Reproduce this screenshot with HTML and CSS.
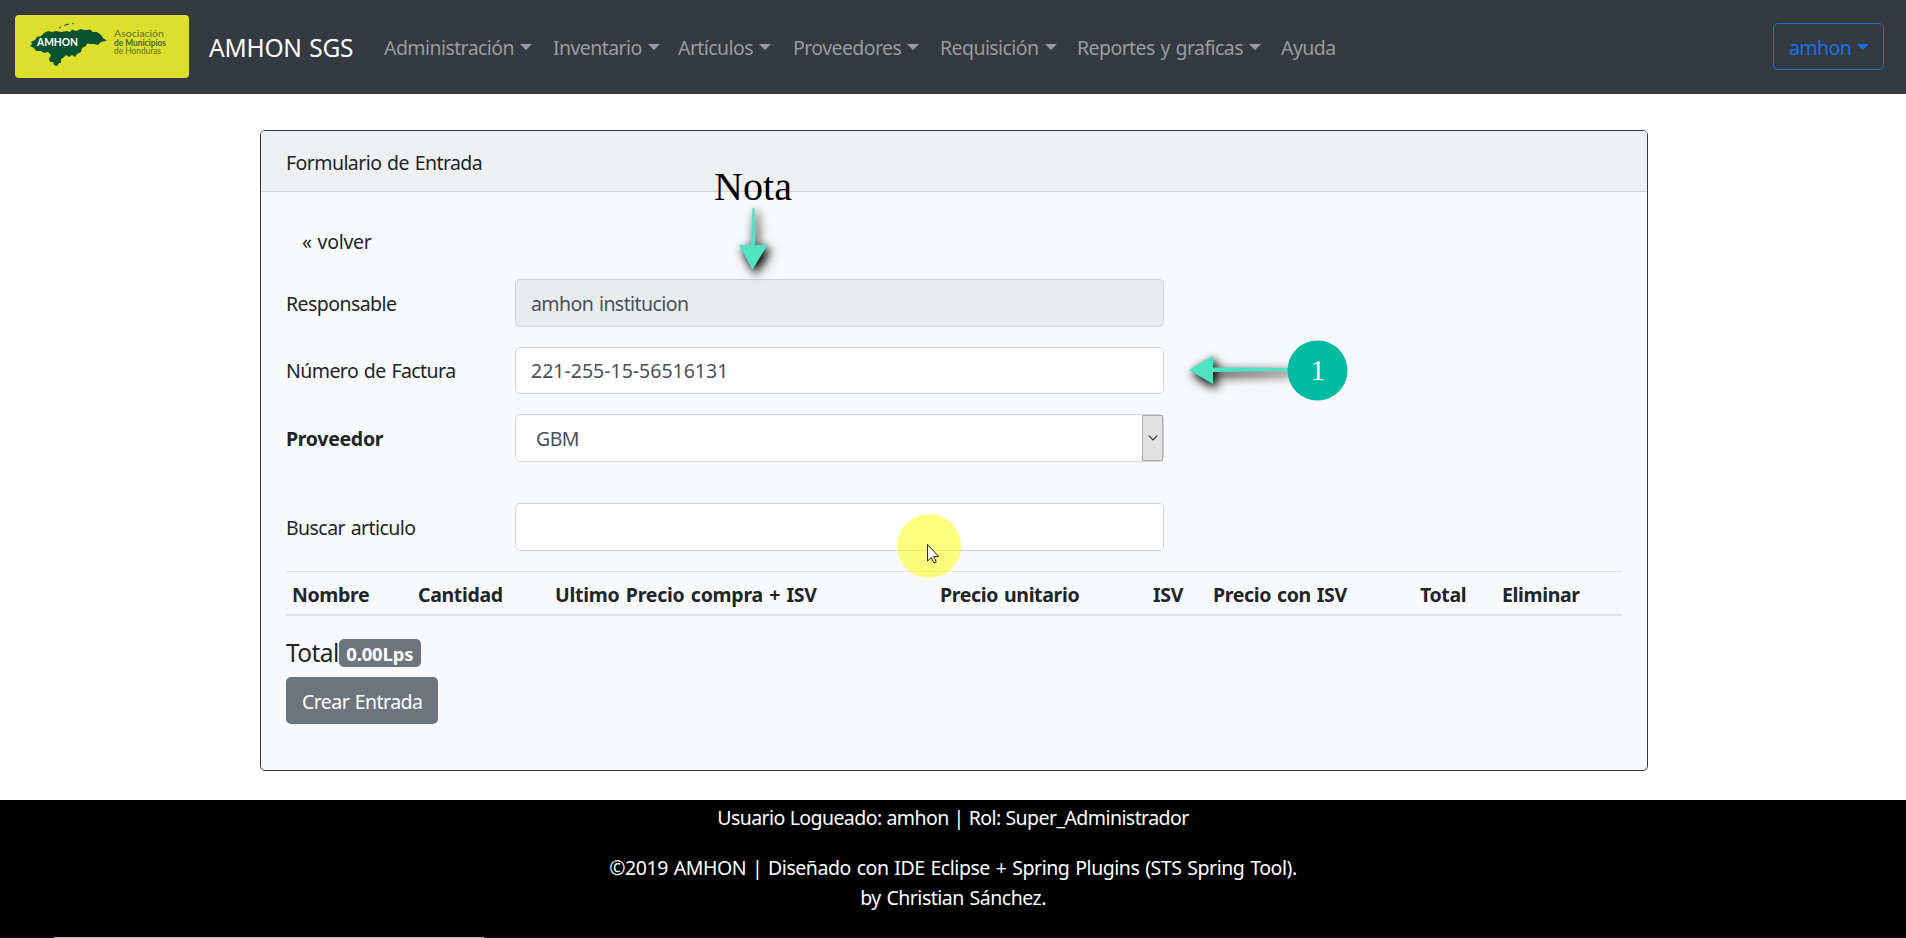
FILE: index.html
```html
<!DOCTYPE html>
<html lang="es">
<head>
<meta charset="utf-8">
<title>AMHON SGS</title>
<link rel="stylesheet" href="styles.css">
</head>
<body>
<nav class="navbar">
  <svg class="logo" viewBox="0 0 174 63" width="174" height="63">
    <rect width="174" height="63" rx="4" fill="#dddf2c"/>
    <path d="M15 31 L17 29 L16 27 L20 25 L22 22 L26 21 L29 18 L33 16 L37 17 L41 16 L46 17 L52 16 L55 17 L57 14.500 L61 16 L66 14 L69 15 L72 15 L75 14.500 L78 17 L82 17 L86 20 L88 23 L92 25.500 L86 27 L83 30 L79 29 L75 29 L72 28.500 L71 31 L67 33 L66 37 L62 39 L60 42 L57 40 L54 42 L51 40 L48 43 L46 44 L46 48 L44 48 L42 51 L39 50 L38 47 L35 47 L34 44 L36 40 L33 37 L29 38 L26 36 L21 36 L19 33 Z" fill="#0b5232"/>
    <path d="M44 13 L46 12 M49 10.500 L54 9 M57 9 L59 8" stroke="#0b5232" stroke-width="1"/>
    <text x="22" y="31" class="logo-name" textLength="41" lengthAdjust="spacingAndGlyphs">AMHON</text>
    <text x="99" y="22" class="logo-text" textLength="50" lengthAdjust="spacingAndGlyphs">Asociación</text>
    <text x="99" y="30.500" class="logo-text logo-strong" textLength="52" lengthAdjust="spacingAndGlyphs">de Municipios</text>
    <text x="99" y="39" class="logo-text" textLength="47" lengthAdjust="spacingAndGlyphs">de Honduras</text>
  </svg>
  <a class="brand">AMHON SGS</a>
  <div class="menu">
    <a class="drop">Administración</a>
    <a class="drop">Inventario</a>
    <a class="drop">Artículos</a>
    <a class="drop">Proveedores</a>
    <a class="drop">Requisición</a>
    <a class="drop">Reportes y graficas</a>
    <a>Ayuda</a>
  </div>
  <a class="user drop">amhon</a>
</nav>

<main class="card">
  <header class="card-header">Formulario de Entrada</header>
  <div class="card-body">
    <a class="back">« volver</a>
    <div class="row"><label>Responsable</label><div class="control readonly">amhon institucion</div></div>
    <div class="row"><label>Número de Factura</label><div class="control digits">221-255-15-56516131</div></div>
    <div class="row wide-gap"><label class="strong">Proveedor</label>
      <div class="control select"><span>GBM</span>
        <span class="select-button"><svg width="10" height="6" viewBox="0 0 10 6"><path d="M.7 .7 L5 5 L9.300 .7" fill="none" stroke="#333" stroke-width="1.200"/></svg></span>
      </div>
    </div>
    <div class="row"><label>Buscar articulo</label><div class="control"></div></div>
    <div class="table-head">
      <span>Nombre</span><span>Cantidad</span><span class="spread">Ultimo Precio compra + ISV</span><span>Precio unitario</span><span>ISV</span><span>Precio con ISV</span><span>Total</span><span>Eliminar</span>
    </div>
    <div class="total"><span>Total</span><span class="badge">0.00Lps</span></div>
    <a class="submit">Crear Entrada</a>
  </div>
</main>

<footer class="footer">
  <p class="session">Usuario Logueado: amhon | Rol: Super_Administrador</p>
  <p class="credits">©2019 AMHON | Diseñado con IDE Eclipse + Spring Plugins (STS Spring Tool).</p>
  <p class="author">by Christian Sánchez.</p>
  <div class="edge"></div>
</footer>

<svg class="notes" width="1906" height="938" viewBox="0 0 1906 938">
  <g class="shadowed">
    <path d="M752.500 208 H754.500 L755 245 H767.500 L752.500 269.500 L739 245 H751 Z" fill="#50e3c2"/>
    <path d="M1189 370 L1213 355.500 V367.500 L1290 368 V370.500 L1213 372 V384 Z" fill="#50e3c2"/>
  </g>
  <text class="note-text" x="714" y="200" textLength="78">Nota</text>
  <circle cx="1317.500" cy="370.500" r="30" fill="#00bba2"/>
  <text class="note-number" x="1317.500" y="380" text-anchor="middle">1</text>
  <circle cx="929" cy="546" r="32" fill="#ffff00" fill-opacity=".5"/>
  <path d="M927.500 544.500 V561 L931.200 557.600 L934 563 L936.300 562 L933.700 556.500 H938.500 Z" fill="#fff" stroke="#222" stroke-width="1"/>
</svg>
</body>
</html>
```
FILE: styles.css
```css
* { box-sizing: border-box; }

body {
  margin: 0;
  height: 938px;
  overflow: hidden;
  display: flex;
  flex-direction: column;
  background: #fff;
  color: #212529;
  font: 19.500px/30px "Noto Sans", "Open Sans", sans-serif;
  letter-spacing: -.57px;
  word-spacing: 1.200px;
  white-space: nowrap;
}

.navbar {
  display: flex;
  align-items: center;
  height: 94px;
  padding: 0 22px 0 15px;
  background: #343a40;
}

.logo { display: block; margin-bottom: 1px; }
.logo-name { font: 700 10.500px Lato, sans-serif; fill: #fff; letter-spacing: 0; word-spacing: 0; }
.logo-text { font: 9px Lato, sans-serif; fill: #59701f; letter-spacing: 0; word-spacing: 0; }
.logo-strong { font-weight: 700; fill: #3f6424; }

.brand {
  width: 175px;
  margin-left: 20px;
  padding-top: 2px;
  color: #fff;
  font-size: 24.500px;
  letter-spacing: -.200px;
}

.menu {
  display: grid;
  grid-template-columns: 169px 125px 115px 147px 137px 204px 60px;
  flex: 1;
  padding-top: 2px;
  color: #999c9f;
}

.drop::after {
  content: "";
  display: inline-block;
  margin-left: 6px;
  vertical-align: 5px;
  border: 6.500px solid transparent;
  border-top-color: currentColor;
  border-bottom: 0;
}

.user {
  width: 111px;
  height: 47px;
  margin-bottom: 1px;
  padding: 9px 15px;
  border: 1px solid #1473dc;
  border-radius: 5px;
  color: #1473e6;
}

.card {
  width: 1388px;
  height: 641px;
  margin: 36px 0 29px 260px;
  border: 1px solid #343a40;
  border-radius: 5px;
  background: #f8f9fa;
}

.card-header {
  height: 61px;
  padding: 17px 25px;
  border-bottom: 1px solid #cfd1d3;
  border-radius: 4px 4px 0 0;
  background: #eff0f1;
}

.card-body { padding: 35px 25px; }

.back { display: block; padding: 0 16px; margin-bottom: 22px; letter-spacing: -.3px; }

.row {
  display: grid;
  grid-template-columns: 229px 649px;
  align-items: center;
  margin-bottom: 20px;
}
.row label { padding-top: 2px; }
.wide-gap { margin-bottom: 41.500px; }
.strong { font-weight: 700; letter-spacing: -.3px; }

.control {
  display: flex;
  align-items: center;
  height: 47.500px;
  padding: 2px 15px 0;
  border: 1px solid #ced4da;
  border-radius: 5px;
  background: #fff;
  color: #495057;
}
.readonly { background: #e9ecef; }
.digits { letter-spacing: 0; }

.select { justify-content: space-between; padding: 0 0 0 20px; }
.select > span:first-child { padding-top: 2px; }
.select-button {
  display: grid;
  place-items: center;
  width: 21px;
  height: 46px;
  border: 1px solid #adadad;
  background: #e1e1e1;
}

.table-head {
  display: grid;
  grid-template-columns: 126px 137px 385px 213px 60px 207px 82px 100px;
  height: 45px;
  padding: 8px 0 0 6px;
  border-top: 1px solid #dee2e6;
  border-bottom: 2px solid #dee2e6;
  font-weight: 700;
  letter-spacing: -.35px;
}
.spread { letter-spacing: -.25px; word-spacing: 1.500px; }

.total {
  display: flex;
  height: 38px;
  margin-top: 23.500px;
  font-size: 24.500px;
  line-height: 28px;
}
.badge {
  width: 82px;
  height: 28px;
  margin-left: 0;
  padding: 1px 0;
  border-radius: 5px;
  background: #6c757d;
  color: #fff;
  font-size: 18.500px;
  font-weight: 700;
  letter-spacing: -.2px;
  text-align: center;
}

.submit {
  display: inline-block;
  width: 152px;
  height: 47px;
  padding: 10px 16px;
  border-radius: 5px;
  background: #6c757d;
  color: #fff;
}

.footer {
  display: flex;
  flex-direction: column;
  height: 138px;
  padding-top: 3px;
  background: #000;
  color: #fff;
  text-align: center;
}
.footer p { margin: 0; }
.footer .session { word-spacing: .4px; }
.footer .credits { margin-top: 20px; letter-spacing: -.45px; }
.footer .author { letter-spacing: -.5px; }
.edge {
  height: 1px;
  margin-top: auto;
  background: linear-gradient(90deg, #171420 54px, #b5b5b5 54px 484px, #171420 484px);
}

.notes { position: absolute; inset: 0; }
.shadowed { filter: drop-shadow(3px 4px 5px #000) drop-shadow(2px 2px 5px rgba(0, 0, 0, .3)); }
.note-text { font: 40px "Liberation Serif", serif; letter-spacing: 0; }
.note-number { font: 29px "Liberation Serif", serif; fill: #fff; }
```
